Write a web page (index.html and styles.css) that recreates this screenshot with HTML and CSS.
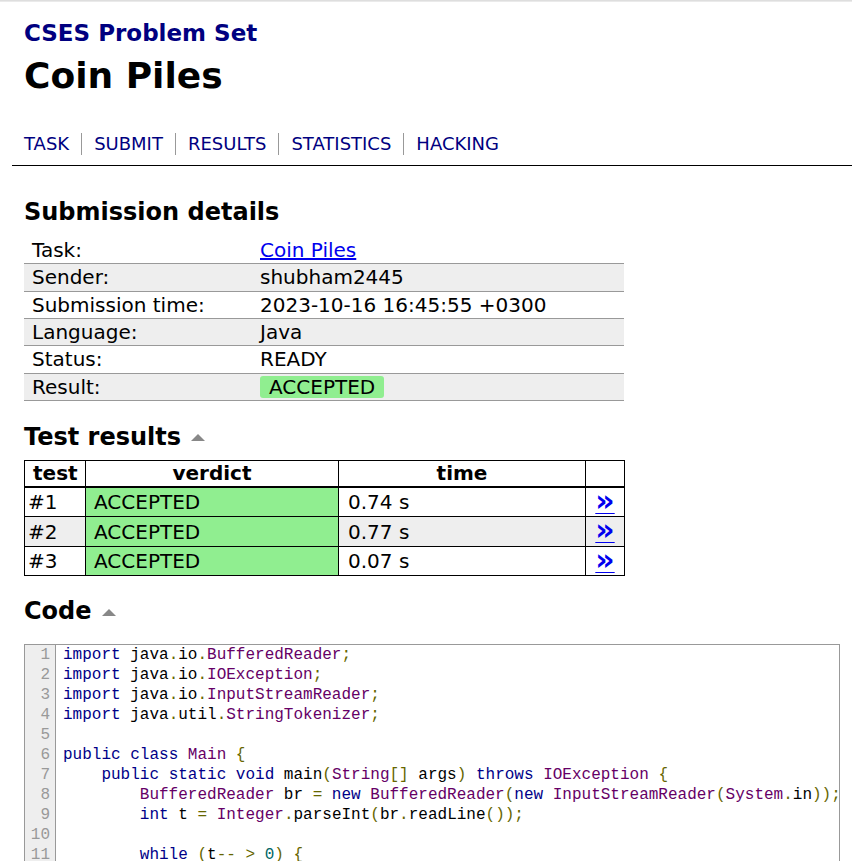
FILE: index.html
```html
<!DOCTYPE html>
<html>
<head>
<meta charset="utf-8">
<link rel="stylesheet" href="styles.css">
</head>
<body>
<div class="topbar"></div>
<div class="page">
  <div class="header">
    <a class="site" href="#">CSES Problem Set</a>
    <h1 class="title">Coin Piles</h1>
    <ul class="nav">
      <li><a href="#">TASK</a></li>
      <li><a href="#">SUBMIT</a></li>
      <li><a href="#">RESULTS</a></li>
      <li><a href="#">STATISTICS</a></li>
      <li><a href="#">HACKING</a></li>
    </ul>
  </div>
  <div class="content">
    <h2 class="h2 first">Submission details</h2>
    <table class="details">
      <colgroup><col class="dk"><col class="dv"></colgroup>
      <tr><td>Task:</td><td><a class="link" href="#">Coin Piles</a></td></tr>
      <tr class="alt"><td>Sender:</td><td>shubham2445</td></tr>
      <tr><td>Submission time:</td><td>2023-10-16 16:45:55 +0300</td></tr>
      <tr class="alt"><td>Language:</td><td>Java</td></tr>
      <tr><td>Status:</td><td>READY</td></tr>
      <tr class="alt"><td>Result:</td><td><span class="badge">ACCEPTED</span></td></tr>
    </table>

    <h2 class="h2 testh">Test results <span class="tri"></span></h2>
    <table class="tests">
      <colgroup><col class="w1"><col class="w2"><col class="w3"><col class="w4"></colgroup>
      <tr class="head"><th>test</th><th>verdict</th><th>time</th><th></th></tr>
      <tr><td class="c1">#1</td><td class="ok">ACCEPTED</td><td class="c3">0.74 s</td><td class="c4"><a class="more" href="#">&raquo;</a></td></tr>
      <tr class="alt"><td class="c1">#2</td><td class="ok">ACCEPTED</td><td class="c3">0.77 s</td><td class="c4"><a class="more" href="#">&raquo;</a></td></tr>
      <tr><td class="c1">#3</td><td class="ok">ACCEPTED</td><td class="c3">0.07 s</td><td class="c4"><a class="more" href="#">&raquo;</a></td></tr>
    </table>

    <h2 class="h2 codeh">Code <span class="tri"></span></h2>
    <div class="code">
      <div class="nums"><div>1</div><div>2</div><div>3</div><div>4</div><div>5</div><div>6</div><div>7</div><div>8</div><div>9</div><div>10</div><div>11</div><div>12</div></div>
<pre class="src"><span class="kwd">import</span> java<span class="pun">.</span>io<span class="pun">.</span><span class="typ">BufferedReader</span><span class="pun">;</span>
<span class="kwd">import</span> java<span class="pun">.</span>io<span class="pun">.</span><span class="typ">IOException</span><span class="pun">;</span>
<span class="kwd">import</span> java<span class="pun">.</span>io<span class="pun">.</span><span class="typ">InputStreamReader</span><span class="pun">;</span>
<span class="kwd">import</span> java<span class="pun">.</span>util<span class="pun">.</span><span class="typ">StringTokenizer</span><span class="pun">;</span>

<span class="kwd">public</span> <span class="kwd">class</span> <span class="typ">Main</span> <span class="pun">{</span>
    <span class="kwd">public</span> <span class="kwd">static</span> <span class="kwd">void</span> main<span class="pun">(</span><span class="typ">String</span><span class="pun">[]</span> args<span class="pun">)</span> <span class="kwd">throws</span> <span class="typ">IOException</span> <span class="pun">{</span>
        <span class="typ">BufferedReader</span> br <span class="pun">=</span> <span class="kwd">new</span> <span class="typ">BufferedReader</span><span class="pun">(</span><span class="kwd">new</span> <span class="typ">InputStreamReader</span><span class="pun">(</span><span class="typ">System</span><span class="pun">.</span>in<span class="pun">));</span>
        <span class="kwd">int</span> t <span class="pun">=</span> <span class="typ">Integer</span><span class="pun">.</span>parseInt<span class="pun">(</span>br<span class="pun">.</span>readLine<span class="pun">());</span>

        <span class="kwd">while</span> <span class="pun">(</span>t<span class="pun">--</span> <span class="pun">&gt;</span> <span class="lit">0</span><span class="pun">)</span> <span class="pun">{</span>
            <span class="typ">StringTokenizer</span> st <span class="pun">=</span> <span class="kwd">new</span> <span class="typ">StringTokenizer</span><span class="pun">(</span>br<span class="pun">.</span>readLine<span class="pun">());</span></pre>
    </div>
  </div>
</div>
</body>
</html>
```
FILE: styles.css
```css
html, body {
  margin: 0;
  padding: 0;
  background: #fff;
}
body {
  font-family: "DejaVu Sans", Verdana, sans-serif;
  color: #000;
  overflow: hidden;
}
.topbar {
  height: 2px;
  background: linear-gradient(#d8d8d8, #f0f0f0);
}
.page {
  margin-left: 12px;
}
.header {
  padding: 0 12px;
  border-bottom: 1px solid #000;
}
.site {
  display: block;
  margin-top: 17px;
  font-size: 23px;
  font-weight: bold;
  line-height: 28px;
  color: #000080;
  text-decoration: none;
}
.title {
  margin: 6px 0 0 0;
  font-size: 36px;
  line-height: 46px;
  font-weight: bold;
}
.nav {
  list-style: none;
  margin: 34px 0 0 0;
  padding: 0 0 10px 0;
  display: flex;
  font-size: 18px;
  line-height: 22px;
}
.nav li {
  border-left: 1px solid #999;
  padding: 0 12px;
}
.nav li:first-child {
  border-left: none;
  padding-left: 0;
}
.nav a {
  color: #000080;
  text-decoration: none;
}
.content {
  padding: 0 12px;
}
.h2 {
  margin: 22px 0 8px 0;
  font-size: 24px;
  line-height: 28px;
  font-weight: bold;
  display: flex;
  align-items: center;
}
.h2.first {
  margin-top: 32px;
  margin-bottom: 11px;
}
.h2.testh {
  margin-bottom: 9px;
}
.h2.codeh {
  margin-top: 21px;
  margin-bottom: 0;
}
.tri {
  display: inline-block;
  width: 0;
  height: 0;
  margin-left: 10px;
  margin-top: 2px;
  border-left: 7px solid transparent;
  border-right: 7px solid transparent;
  border-bottom: 7px solid #888;
}
table {
  border-collapse: collapse;
  font-size: 20px;
  table-layout: fixed;
}
.details {
  width: 600px;
}
.details col.dk { width: 228px; }
.details col.dv { width: 372px; }
.details td {
  padding: 0 8px;
  height: 26.33px;
  line-height: 24px;
  border-bottom: 1px solid #999;
}
.details tr.alt td {
  background: #eee;
}
.link {
  color: #0000ee;
  text-decoration: underline;
}
.badge {
  display: inline-block;
  padding: 0 9px;
  background: #90ee90;
  border-radius: 3px;
  line-height: 22px;
}
.tests {
  width: 600px;
  border: 1px solid #000;
}
.tests col.w1 { width: 61px; }
.tests col.w2 { width: 253px; }
.tests col.w3 { width: 247px; }
.tests col.w4 { width: 39px; }
.tests th, .tests td {
  border: 1px solid #000;
  padding: 0 8px;
}
.tests th {
  height: 25px;
  line-height: 24px;
  font-weight: bold;
  text-align: center;
  border-bottom: 2px solid #000;
}
.tests td {
  height: 28.5px;
  line-height: 24px;
}
.tests td.c1 {
  padding-left: 3px;
}
.tests td.c3 {
  padding-left: 9px;
}
.tests td.c4 {
  text-align: center;
  padding: 0;
}
.tests tr.alt td {
  background: #eee;
}
.tests tr td.ok {
  background: #90ee90;
}
.more {
  color: #0000ee;
  font-weight: bold;
  font-size: 30px;
  line-height: 24px;
  text-decoration: underline;
  text-decoration-thickness: 1px;
  text-underline-offset: 2px;
}
.code {
  display: flex;
  width: 814px;
  border: 1px solid #999;
  font-family: "Liberation Mono", "DejaVu Sans Mono", monospace;
  font-size: 16px;
  line-height: 20px;
  overflow: hidden;
  margin-top: 19px;
}
.nums {
  background: #eee;
  border-right: 1px solid #999;
  color: #999;
  text-align: right;
  padding: 0 5px 0 0;
  width: 25px;
  flex: none;
}
.src {
  margin: 0 0 0 7px;
  font-family: inherit;
  font-size: inherit;
  line-height: inherit;
  color: #000;
  white-space: pre;
}
.kwd { color: #000088; }
.typ { color: #660066; }
.pun { color: #666600; }
.lit { color: #006666; }
```
